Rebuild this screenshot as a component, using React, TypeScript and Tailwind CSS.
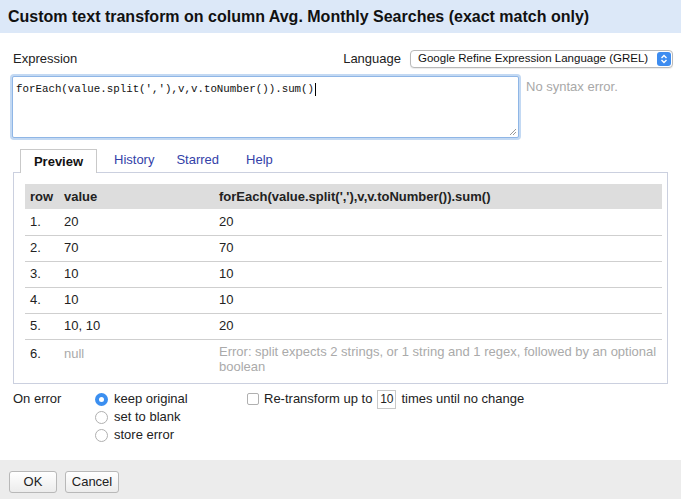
import React from "react";

const rows: { n: string; v: string; r: string; err?: boolean }[] = [
  { n: "1.", v: "20", r: "20" },
  { n: "2.", v: "70", r: "70" },
  { n: "3.", v: "10", r: "10" },
  { n: "4.", v: "10", r: "10" },
  { n: "5.", v: "10, 10", r: "20" },
  {
    n: "6.",
    v: "null",
    r: "Error: split expects 2 strings, or 1 string and 1 regex, followed by an optional boolean",
    err: true,
  },
];

export default function App() {
  return (
    <div
      className="w-[681px] h-[499px] bg-white flex flex-col text-[13px] text-[#222] overflow-hidden"
      style={{ fontFamily: '"Liberation Sans", Arial, sans-serif' }}
    >
      <div className="h-[33px] shrink-0 bg-[#dce8f8] flex items-center pl-[8px]">
        <span className="text-[16px] font-bold text-[#111] whitespace-nowrap">
          Custom text transform on column Avg. Monthly Searches (exact match only)
        </span>
      </div>

      <div className="flex-1 flex flex-col px-[12px]">
        <div className="flex items-center justify-between mt-[17px] h-[18px]">
          <span className="pl-[1px]">Expression</span>
          <div className="flex items-center gap-[9px] mr-[-4px]">
            <span>Language</span>
            <div className="w-[263px] h-[18px] border border-[#b9b9b9] rounded-[4px] bg-white flex items-center justify-between pl-[7px] pr-[1px] shadow-[0_1px_1px_rgba(0,0,0,0.08)]">
              <span className="text-[11.5px] text-[#111] whitespace-nowrap">Google Refine Expression Language (GREL)</span>
              <div className="w-[14px] h-[14px] rounded-[3px] bg-[#3d8cf0] flex items-center justify-center">
                <svg width="8" height="10" viewBox="0 0 8 10" fill="none" stroke="white" strokeWidth="1.4">
                  <path d="M1.5 4 L4 1.5 L6.5 4" />
                  <path d="M1.5 6 L4 8.5 L6.5 6" />
                </svg>
              </div>
            </div>
          </div>
        </div>

        <div className="flex items-start mt-[8px]">
          <div className="relative w-[507px] h-[62px] border border-[#8fb6e6] rounded-[2px] shadow-[0_0_0_2px_#c3d9f3] bg-white px-[3px] pt-[4px]">
            <div
              className="text-[10.8px] text-[#111] flex items-center"
              style={{ fontFamily: '"Liberation Mono", "Courier New", monospace' }}
            >
              forEach(value.split(&apos;,&apos;),v,v.toNumber()).sum()
              <span className="inline-block w-[1px] h-[13px] bg-black ml-[1px]" />
            </div>
            <svg className="absolute right-[1px] bottom-[1px]" width="9" height="9" viewBox="0 0 9 9" stroke="#999" strokeWidth="1">
              <path d="M8 2 L2 8" />
              <path d="M8 5 L5 8" />
            </svg>
          </div>
          <span className="ml-[7px] mt-[1px] text-[#a8a8a8]">No syntax error.</span>
        </div>

        <div className="flex items-end mt-[11px] h-[23px] pl-[8px]">
          <div className="h-[24px] w-[77px] border border-b-0 border-[#c9c9c9] bg-white flex items-center justify-center font-bold text-[#111] relative z-10 mb-[-1px]">
            Preview
          </div>
          <div className="flex items-center h-[23px] text-[#3341a8] pb-[1px]">
            <span className="ml-[17px]">History</span>
            <span className="ml-[22px]">Starred</span>
            <span className="ml-[27px]">Help</span>
          </div>
        </div>

        <div className="border border-[#cbd0df] h-[212px] mx-[1px] px-[11px] pt-[11px]">
          <table className="w-[637px] border-collapse">
            <thead>
              <tr className="bg-[#dddddd] h-[25px] text-left font-bold text-[#222]">
                <th className="pl-[5px] w-[39px] font-bold">row</th>
                <th className="w-[155px] font-bold">value</th>
                <th className="font-bold">forEach(value.split(&apos;,&apos;),v,v.toNumber()).sum()</th>
              </tr>
            </thead>
            <tbody>
              {rows.map((r, i) => (
                <tr key={i} className={i < rows.length - 1 ? "border-b border-[#cfcfcf]" : ""}>
                  <td className={"pl-[5px] " + (r.err ? "pt-[4px] h-[34px] align-top" : "h-[26px] align-middle")}>
                    {r.n}
                  </td>
                  <td className={r.err ? "text-[#aaa] pt-[4px] align-top" : "align-middle"}>{r.v}</td>
                  <td className={r.err ? "text-[#aaa] pt-[4px] align-top leading-[15px]" : "align-middle"}>{r.r}</td>
                </tr>
              ))}
            </tbody>
          </table>
        </div>

        <div className="flex mt-[6px] pl-[1px]">
          <span className="w-[82px] h-[18px] flex items-center">On error</span>
          <div className="flex flex-col w-[152px]">
            {[
              ["keep original", true],
              ["set to blank", false],
              ["store error", false],
            ].map(([l, on], i) => (
              <div key={i} className="flex items-center h-[18px]">
                {on ? (
                  <span className="w-[13px] h-[13px] rounded-full bg-[#3b8ff0] flex items-center justify-center">
                    <span className="w-[5px] h-[5px] rounded-full bg-white" />
                  </span>
                ) : (
                  <span className="w-[13px] h-[13px] rounded-full border border-[#b0b0b0] bg-white" />
                )}
                <span className="ml-[6px]">{l as string}</span>
              </div>
            ))}
          </div>
          <div className="flex items-start">
            <div className="flex items-center h-[18px]">
              <span className="w-[12px] h-[12px] border border-[#b0b0b0] rounded-[2px] bg-white" />
              <span className="ml-[5px]">Re-transform up to</span>
              <span className="ml-[5px] w-[19px] h-[19px] border border-[#c8c8c8] flex items-center justify-center text-[12px]">10</span>
              <span className="ml-[5px]">times until no change</span>
            </div>
          </div>
        </div>
      </div>

      <div className="h-[39px] shrink-0 bg-[#ececec] flex items-center pl-[9px] gap-[8px] pt-[5px]">
        <button className="w-[48px] h-[22px] border border-[#b8b8b8] rounded-[3px] bg-gradient-to-b from-white to-[#ececec] text-[13px]">
          OK
        </button>
        <button className="w-[54px] h-[22px] border border-[#b8b8b8] rounded-[3px] bg-gradient-to-b from-white to-[#ececec] text-[13px]">
          Cancel
        </button>
      </div>
    </div>
  );
}
